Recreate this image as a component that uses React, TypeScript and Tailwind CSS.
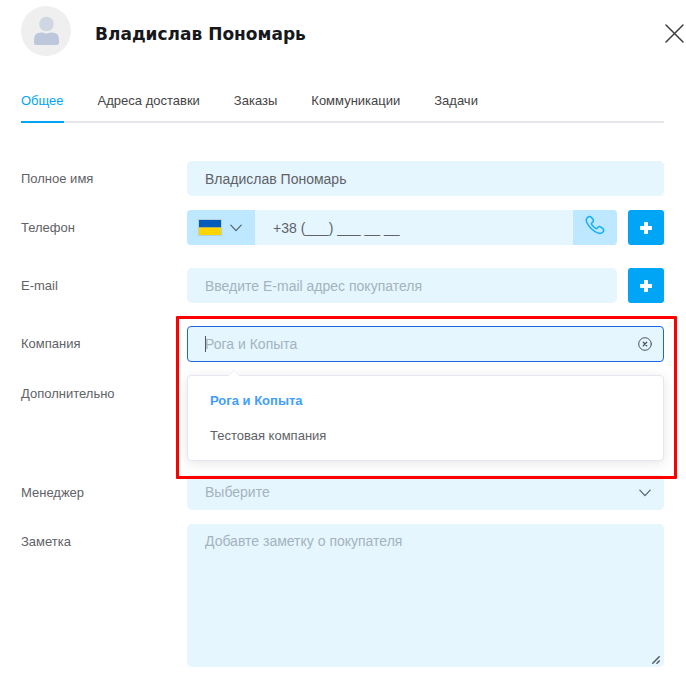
import { useState } from 'react';

const tabs = ['Общее', 'Адреса доставки', 'Заказы', 'Коммуникации', 'Задачи'];
const companies = ['Рога и Копыта', 'Тестовая компания'];

const labelClass = 'w-[166px] shrink-0 text-[13px] leading-[35px] text-[#606266]';
const fieldClass =
    'h-[35px] w-full min-w-0 rounded-[5px] bg-[#e5f6ff] px-[18px] text-[14px] text-[#606266] placeholder-[#a4b3bd] outline-none';

function Chevron({ className }: { className: string }) {
    return (
        <svg className={className} width="12" height="8" viewBox="0 0 12 8" fill="none" stroke="#55616b" strokeWidth="1.2" strokeLinecap="round" strokeLinejoin="round">
            <path d="M0.8 1.2 6 6.6l5.2-5.4" />
        </svg>
    );
}

function AddButton({ label }: { label: string }) {
    return (
        <button
            type="button"
            aria-label={label}
            className="ml-[11px] flex h-[35px] w-9 shrink-0 items-center justify-center rounded-[3px] bg-[#00a5f5]"
        >
            <svg width="12" height="12" viewBox="0 0 12 12" fill="#fff">
                <rect x="4" width="4" height="12" rx="0.8" />
                <rect y="4" width="12" height="4" rx="0.8" />
            </svg>
        </button>
    );
}

export default function App() {
    const [tab, setTab] = useState('Общее');
    const [name, setName] = useState('Владислав Пономарь');
    const [phone, setPhone] = useState('+38 (___) ___ __ __');
    const [company, setCompany] = useState('Рога и Копыта');
    const [search, setSearch] = useState('');

    return (
        <main className="min-h-screen bg-white pt-[6px] pb-4 pl-[21px] font-['Liberation_Sans',Arial,sans-serif]">
            <header className="flex h-[50px] items-center pr-[2px]">
                <svg className="shrink-0" width="50" height="50" viewBox="0 0 50 50">
                    <circle cx="25" cy="25" r="25" fill="#efefef" />
                    <circle cx="25.5" cy="18" r="7.3" fill="#d0d7e3" />
                    <path d="M13 37v-3.5q0-7 7-7h2q3.500 1.800 7 0h2q7 0 7 7V37q0 2-2 2H15q-2 0-2-2z" fill="#bdc7dc" />
                </svg>
                <h1 className="ml-6 flex-1 pt-2 font-['DejaVu_Sans',sans-serif] text-[17px] font-bold text-[#17181c]">{name}</h1>
                <button type="button" aria-label="Закрыть" className="mt-1">
                    <svg width="19" height="19" viewBox="0 0 19 19" fill="none" stroke="#3c3c3c" strokeWidth="1.5" strokeLinecap="round">
                        <path d="M1 1l17 17M18 1 1 18" />
                    </svg>
                </button>
            </header>

            <div className="pr-[22px]">
                <nav className="mt-7 flex gap-[34px] border-b-2 border-[#e4e5ed]">
                    {tabs.map((t) => (
                        <button
                            key={t}
                            type="button"
                            onClick={() => setTab(t)}
                            className={`-mb-[2px] border-b-2 pt-[7px] pb-[10px] text-[13px] leading-5 whitespace-nowrap ${
                                t === tab ? 'border-[#00a5f5] text-[#00a5f5]' : 'border-transparent text-[#444]'
                            }`}
                        >
                            {t}
                        </button>
                    ))}
                </nav>

                <form className="mt-[38px]" onSubmit={(e) => e.preventDefault()}>
                    <div className="flex">
                        <label htmlFor="name" className={labelClass}>Полное имя</label>
                        <input id="name" className={fieldClass} value={name} onChange={(e) => setName(e.target.value)} />
                    </div>

                    <div className="mt-[14px] flex">
                        <label htmlFor="phone" className={labelClass}>Телефон</label>
                        <div className="flex min-w-0 flex-1 overflow-hidden rounded-[4px] bg-[#e5f6ff]">
                            <div className="relative flex w-[68px] shrink-0 items-center bg-[#bde8ff] pl-[11px]">
                                <svg width="24" height="17" viewBox="0 0 24 17">
                                    <rect width="24" height="17" fill="#b3cfe0" />
                                    <rect x="1" y="1" width="22" height="7.500" fill="#005bbb" />
                                    <rect x="1" y="8.500" width="22" height="7.500" fill="#ffd500" />
                                </svg>
                                <Chevron className="ml-2" />
                                <select aria-label="Код страны" className="absolute inset-0 opacity-0">
                                    <option>+38</option>
                                </select>
                            </div>
                            <input
                                id="phone"
                                type="tel"
                                className="h-[35px] w-full min-w-0 bg-transparent px-[18px] text-[14px] text-[#606266] outline-none"
                                value={phone}
                                onChange={(e) => setPhone(e.target.value)}
                            />
                            <button type="button" aria-label="Позвонить" className="flex w-11 shrink-0 justify-center bg-[#bde8ff] pt-[5px]">
                                <svg width="20" height="20" viewBox="0 0 20 20" fill="none" stroke="#14aef8" strokeWidth="1.500" strokeLinejoin="round">
                                    <path d="M2.500 2.500C3.800 1.200 5.200 1.200 6.200 2.200l1.600 1.900c.9 1.100.8 2.100-.1 3l-.9.9c-.5.5-.4 1 0 1.600 1 1.500 2.300 2.800 3.800 3.700.6.400 1.100.4 1.500-.1l.9-.9c.9-.9 1.900-1 3-.2l1.900 1.500c1.100.9 1.100 2.200.1 3.300-1.400 1.500-3.300 1.800-5.200 1C8 15.900 3.900 11.900 1.700 7.200.900 5.400 1.100 3.900 2.500 2.500z" />
                                </svg>
                            </button>
                        </div>
                        <AddButton label="Добавить телефон" />
                    </div>

                    <div className="mt-[23px] flex">
                        <label htmlFor="email" className={labelClass}>E-mail</label>
                        <input id="email" type="email" className={fieldClass} placeholder="Введите E-mail адрес покупателя" />
                        <AddButton label="Добавить E-mail" />
                    </div>

                    <div className="mt-[23px] flex">
                        <label htmlFor="company" className={labelClass}>Компания</label>
                        <div className="relative min-w-0 flex-1">
                            <input
                                id="company"
                                className="block h-9 w-full rounded-[4px] border border-[#1a66e8] bg-[#e5f6ff] pr-10 pl-[17px] text-[14px] text-[#606266] placeholder-[#a4b3bd] outline-none"
                                placeholder={company}
                                value={search}
                                onChange={(e) => setSearch(e.target.value)}
                            />
                            <span className="absolute top-[10px] left-[18px] h-4 w-px bg-[#555]" />
                            <button type="button" aria-label="Очистить" onClick={() => setSearch('')} className="absolute top-[11px] right-3">
                                <svg width="14" height="14" viewBox="0 0 14 14" fill="none" stroke="#4b535a" strokeLinecap="round">
                                    <circle cx="7" cy="7" r="6.300" />
                                    <path d="M5.300 5.300l3.400 3.400M8.700 5.300 5.300 8.700" strokeWidth="1.300" />
                                </svg>
                            </button>

                            {/* список компаний */}
                            <div className="absolute inset-x-0 top-[49px] z-10 rounded-[4px] border border-[#e4e7ed] bg-white py-[7px] shadow-[0_2px_12px_0_rgba(0,0,0,0.1)]">
                                <svg className="absolute -top-[6px] left-10" width="12" height="7" viewBox="0 0 12 7">
                                    <path d="M0 6.500 6 .6l6 5.900z" fill="#fff" />
                                    <path d="M0 6 6 .6 12 6" fill="none" stroke="#ebeef5" />
                                </svg>
                                {companies.map((c) => (
                                    <button
                                        key={c}
                                        type="button"
                                        onClick={() => setCompany(c)}
                                        className={`block h-[35px] w-full px-[22px] text-left text-[13px] ${
                                            c === company ? 'font-bold text-[#409eff]' : 'text-[#606266]'
                                        }`}
                                    >
                                        {c}
                                    </button>
                                ))}
                            </div>
                            <div className="pointer-events-none absolute -top-[10px] -right-[13px] -left-[11px] z-20 h-[163px] rounded-[1px] border-3 border-[#ff0000]" />
                        </div>
                    </div>

                    <div className="mt-[14px] h-[85px]">
                        <span className={labelClass}>Дополнительно</span>
                    </div>

                    <div className="mt-[14px] flex">
                        <label htmlFor="manager" className={labelClass}>Менеджер</label>
                        <div className="relative min-w-0 flex-1">
                            <select
                                id="manager"
                                className="block h-[35px] w-full appearance-none rounded-[5px] bg-[#e5f6ff] px-[18px] text-[14px] text-[#a4b3bd] outline-none"
                            >
                                <option>Выберите</option>
                            </select>
                            <Chevron className="pointer-events-none absolute top-[14px] right-[13px]" />
                        </div>
                    </div>

                    <div className="mt-[14px] flex">
                        <label htmlFor="note" className={labelClass}>Заметка</label>
                        <div className="relative min-w-0 flex-1">
                            <textarea
                                id="note"
                                className="block h-[143px] w-full resize-none rounded-[5px] bg-[#e5f6ff] px-[18px] py-[7px] text-[14px] leading-5 text-[#606266] placeholder-[#a4b3bd] outline-none"
                                placeholder="Добавте заметку о покупателя"
                            />
                            <svg className="pointer-events-none absolute right-1 bottom-[3px]" width="8" height="8" viewBox="0 0 8 8" stroke="#565d62" strokeWidth="1.500">
                                <path d="M0.300 7.700 7.700.3M4.500 7.700l3.200-3.200" />
                            </svg>
                        </div>
                    </div>
                </form>
            </div>
        </main>
    );
}
